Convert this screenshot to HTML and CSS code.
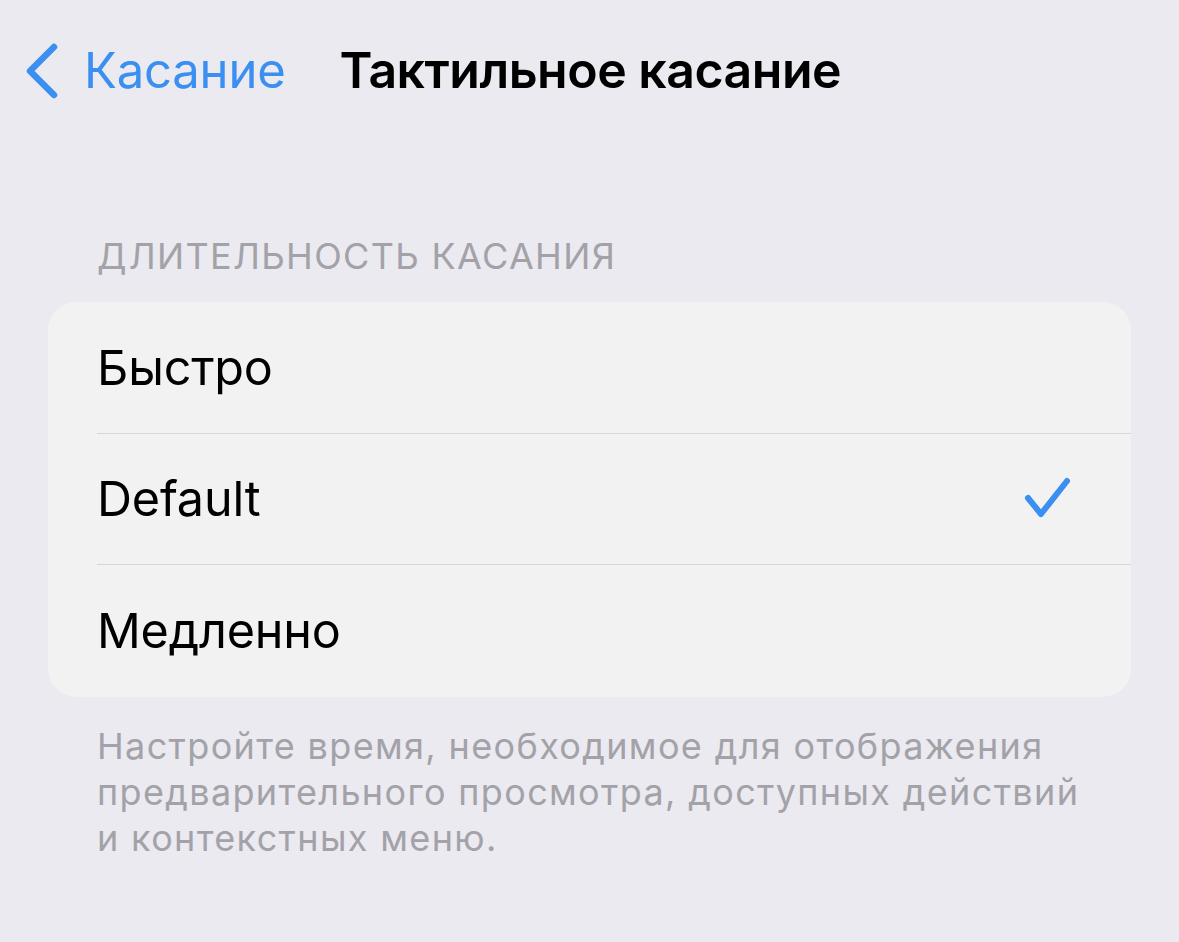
FILE: index.html
```html
<!DOCTYPE html>
<html lang="ru">
<head>
  <meta charset="UTF-8" />
  <title>Тактильное касание</title>
  <link rel="stylesheet" href="styles.css">
</head>
<body>
  <header class="nav">
    <a class="back" href="#">
      <svg class="back-icon" width="40" height="60" viewBox="0 0 40 60">
        <path d="M32 6 L8 30 L32 54" fill="none" stroke="#3a8ff0" stroke-width="6.5" stroke-linecap="round" stroke-linejoin="round"/>
      </svg>
      <span>Касание</span>
    </a>
    <h1 class="title">Тактильное касание</h1>
  </header>

  <section class="group">
    <div class="group-header">ДЛИТЕЛЬНОСТЬ КАСАНИЯ</div>
    <ul class="list">
      <li class="row"><span>Быстро</span></li>
      <li class="row">
        <span>Default</span>
        <svg class="check" width="50" height="46" viewBox="0 0 50 46">
          <path d="M5 22 L18 38 L44 5" fill="none" stroke="#3a8ff0" stroke-width="6" stroke-linecap="round" stroke-linejoin="round"/>
        </svg>
      </li>
      <li class="row"><span>Медленно</span></li>
    </ul>
    <p class="group-footer">Настройте время, необходимое для отображения предварительного просмотра, доступных действий и контекстных меню.</p>
  </section>
</body>
</html>
```

FILE: styles.css
```css
*, *::before, *::after { box-sizing: border-box; }
body {
  margin: 0;
  background: #ebeaf0;
  font-family: 'Inter', 'Roboto', sans-serif;
  color: #000;
  width: 1179px; height: 942px;
  overflow: hidden;
}

/* навигация */
.nav {
  display: flex; align-items: center;
  height: 140px;
  padding: 0 0 0 22px;
}
.back {
  display: flex; align-items: center; gap: 22px;
  color: #3a8ff0; text-decoration: none;
  font-size: 49px; letter-spacing: -0.2px;
}
.back-icon { flex: none; margin-top: 2px; }
.title {
  margin: 0 0 0 54px;
  font-size: 50px; font-weight: 600; letter-spacing: -0.5px;
}

/* группа */
.group { padding: 0 48px; margin-top: 96px; }
.group-header {
  padding-left: 49px;
  font-size: 36px; color: #a3a2a8; letter-spacing: 1.35px;
  line-height: 40px;
}
.list {
  list-style: none; margin: 26px 0 0; padding: 0 0 0 49px;
  background: #f2f2f3; border-radius: 28px;
}
.row {
  display: flex; align-items: center; justify-content: space-between;
  height: 131.5px;
  padding-right: 58px;
  font-size: 48.5px; letter-spacing: -0.2px;
  border-bottom: 1.5px solid #d6d6d9;
}
.row:last-child { border-bottom: none; }
.check { flex: none; }
.group-footer {
  margin: 26px 0 0; padding: 0 0 0 49px;
  max-width: 1045px;
  font-size: 36px; line-height: 46px; color: #a3a2a8;
  letter-spacing: 1.35px;
}
```
